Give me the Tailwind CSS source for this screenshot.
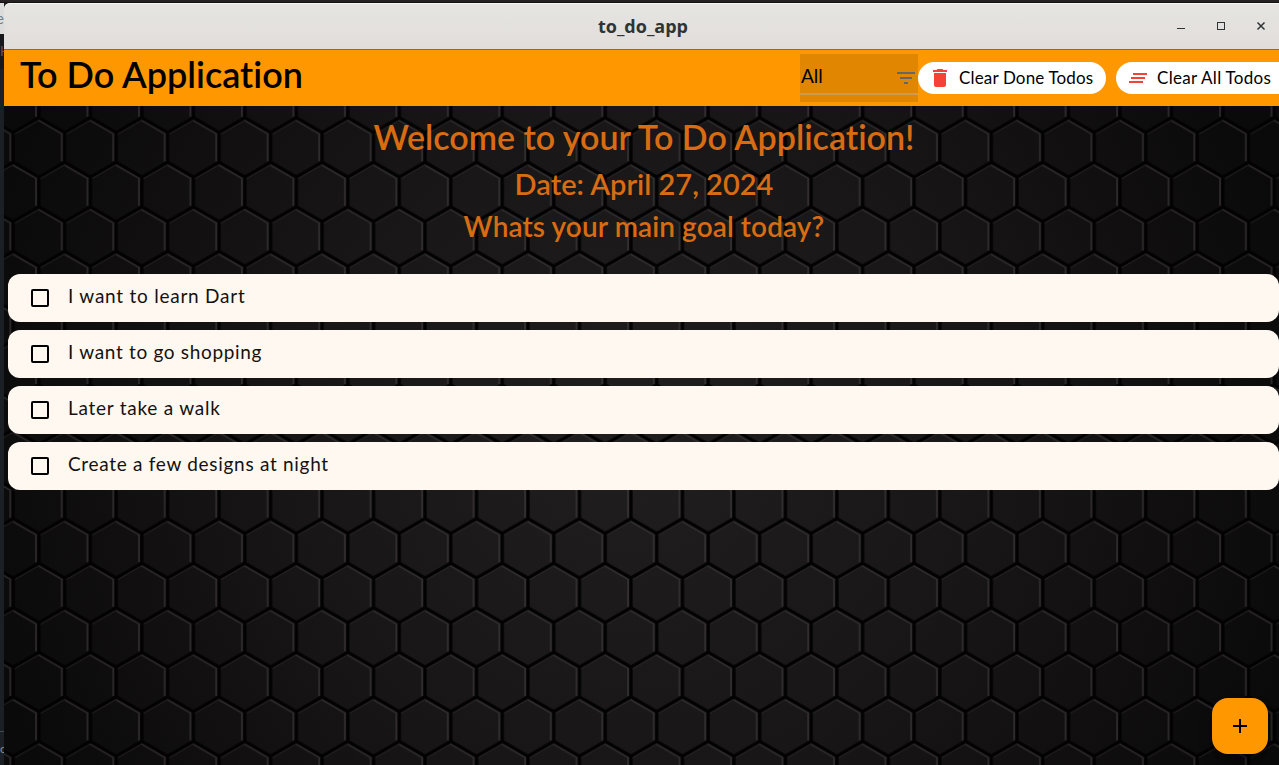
<!DOCTYPE html>
<html lang="en">
<head>
<meta charset="utf-8">
<title>to_do_app</title>
<script src="https://cdn.jsdelivr.net/npm/@tailwindcss/browser@4"></script>
</head>
<body class="w-[1279px] h-[765px] overflow-hidden bg-[#1b2027] flex flex-col font-['Lato',sans-serif] [font-variant-ligatures:none]">
<div class="h-[3px] shrink-0 bg-[#262224] border-b border-[#111]"></div>
<div class="flex flex-1 min-h-0">
  <aside class="w-1 shrink-0 overflow-hidden flex flex-col text-[12px] bg-[#1b2027]">
    <div class="h-[31px] shrink-0 bg-[#dcdcda] flex items-center justify-end text-[#6d8191] text-[15px]">e</div>
    <div class="h-[35px] shrink-0 bg-[#17181b] flex items-center text-[#655] text-[13px]">H</div>
    <div class="flex-1"></div>
    <div class="h-[34px] shrink-0 border-t border-[#444b54] flex items-center text-[#8a8f90]">c</div>
  </aside>
  <main class="flex-1 min-w-0 flex flex-col">
    <header class="h-[47px] shrink-0 flex items-center bg-linear-to-b from-[#e6e5e1] to-[#e1dddb] border-b border-[#77706c] rounded-tl-md shadow-[inset_0_1px_0_#f7f7f5]">
      <div class="flex-1 pl-[3px] text-center text-[#2e3436] font-bold text-[18px] font-['Open_Sans',sans-serif]">to_do_app</div>
      <svg class="absolute left-[1170px] top-[16px]" width="100" height="20" fill="none" stroke="#2e3436"><path d="M7 12.500h8"/><rect x="47.500" y="6.500" width="7" height="7"/><path d="M87.500 6.500l7 7m0-7l-7 7" stroke-width="1.500"/></svg>
    </header>
    <nav class="h-14 shrink-0 bg-[#ff9800] flex items-center text-black overflow-hidden">
      <h1 class="flex-1 pl-4 pb-2 whitespace-nowrap font-semibold text-[36px]">To Do Application</h1>
      <div class="w-[118px] h-12 shrink-0 bg-[#e08600] pb-[7px]">
        <div class="h-[41px] border-b-2 border-[#cf9a50] flex items-center justify-between">
          <span class="text-[19px] pt-[5px] pl-px">All</span>
          <svg width="24" height="24" viewBox="0 0 24 24" fill="#666" class="mt-2"><path d="M10 18h4v-2h-4v2zM3 6v2h18V6H3zm3 7h12v-2H6v2z"/></svg>
        </div>
      </div>
      <div class="w-[188px] h-8 shrink-0 rounded-full bg-white flex items-center pl-[10px] gap-[7px] whitespace-nowrap text-[17px]">
        <svg width="24" height="24" viewBox="0 0 24 24" fill="#f44336"><path d="M6 19c0 1.100.9 2 2 2h8c1.100 0 2-.9 2-2V7H6v12zM19 4h-3.500l-1-1h-5l-1 1H5v2h14V4z"/></svg>
        <span class="pb-px tracking-[0.15px]">Clear Done Todos</span>
      </div>
      <div class="w-[180px] h-8 ml-[10px] -mr-[17px] shrink-0 rounded-full bg-white flex items-center pl-[10px] gap-[7px] whitespace-nowrap text-[17px]">
        <svg width="24" height="24" viewBox="0 0 24 24" fill="#f44336"><path d="M5 13h14v-2H5v2zm-2 4h14v-2H3v2zM7 7v2h14V7H7z"/></svg>
        <span class="pb-px tracking-[0.28px]">Clear All Todos</span>
      </div>
    </nav>
    <section class="relative flex-1 min-h-0 bg-black overflow-hidden">
      <svg class="absolute inset-0" width="1275" height="659" viewBox="4 106 1275 659">
        <defs>
          <radialGradient id="glow" gradientUnits="userSpaceOnUse" cx="640" cy="440" r="680"><stop offset="0" stop-color="#211e1f"/><stop offset=".5" stop-color="#181617"/><stop offset="1" stop-color="#0b0a0b"/></radialGradient>
          <pattern id="hex" patternUnits="userSpaceOnUse" x="13.200" y="117.700" width="51.480" height="89.100">
            <g fill="none" stroke="#4a4445" stroke-opacity=".48">
              <path stroke-width="2" d="M48.700 16.500V43.500M22.900 61V88M25.740 2.700L50 16.700M0 47.250L24.200 61.200"/>
              <path stroke-width="1" d="M25.740 2.400L0 17.200M51.480 46.950L25.740 61.750"/>
            </g>
            <path fill="none" stroke="#030203" stroke-width="3.400" d="M0 14.800L25.740 0L51.480 14.800M0 14.800V44.550M51.480 14.800V44.550M0 44.550L25.740 59.350L51.480 44.550M25.740 59.350V89.100L0 103.900M25.740 89.100L51.480 103.900M25.740 0V-9"/>
          </pattern>
        </defs>
        <rect x="4" y="106" width="1275" height="659" fill="url(#glow)"/>
        <rect x="4" y="106" width="1275" height="659" fill="url(#hex)"/>
      </svg>
      <div class="relative flex flex-col items-center pl-[5px] pt-[7px] text-[#d86c12] font-semibold whitespace-nowrap">
        <div class="h-12 flex items-center text-[34px] pb-0.5">Welcome to your To Do Application!</div>
        <div class="h-[46px] flex items-center text-[29px]">Date: April 27, 2024</div>
        <div class="h-[38px] flex items-center text-[28px] tracking-[0.1px]">Whats your main goal today?</div>
      </div>
      <ul class="relative mt-[29px] ml-1 flex flex-col gap-2 text-[19px] text-[#141210] whitespace-nowrap">
        <li class="h-12 bg-[#fff8f1] rounded-xl flex items-center pl-[23px] gap-[19px]"><i class="size-[18px] border-2 border-black rounded-[2px]"></i><span class="pb-[3px] tracking-[0.76px]">I want to learn Dart</span></li>
        <li class="h-12 bg-[#fff8f1] rounded-xl flex items-center pl-[23px] gap-[19px]"><i class="size-[18px] border-2 border-black rounded-[2px]"></i><span class="pb-[3px] tracking-[0.68px]">I want to go shopping</span></li>
        <li class="h-12 bg-[#fff8f1] rounded-xl flex items-center pl-[23px] gap-[19px]"><i class="size-[18px] border-2 border-black rounded-[2px]"></i><span class="pb-[3px] tracking-[0.75px]">Later take a walk</span></li>
        <li class="h-12 bg-[#fff8f1] rounded-xl flex items-center pl-[23px] gap-[19px]"><i class="size-[18px] border-2 border-black rounded-[2px]"></i><span class="pb-[3px] tracking-[0.7px]">Create a few designs at night</span></li>
      </ul>
      <button class="absolute left-[1208px] top-[592px] size-14 rounded-2xl bg-[#ff9800] flex items-center justify-center shadow-lg shadow-black/40"><svg width="24" height="24" viewBox="0 0 24 24"><path d="M19 13h-6v6h-2v-6H5v-2h6V5h2v6h6v2z"/></svg></button>
    </section>
  </main>
</div>
</body>
</html>
